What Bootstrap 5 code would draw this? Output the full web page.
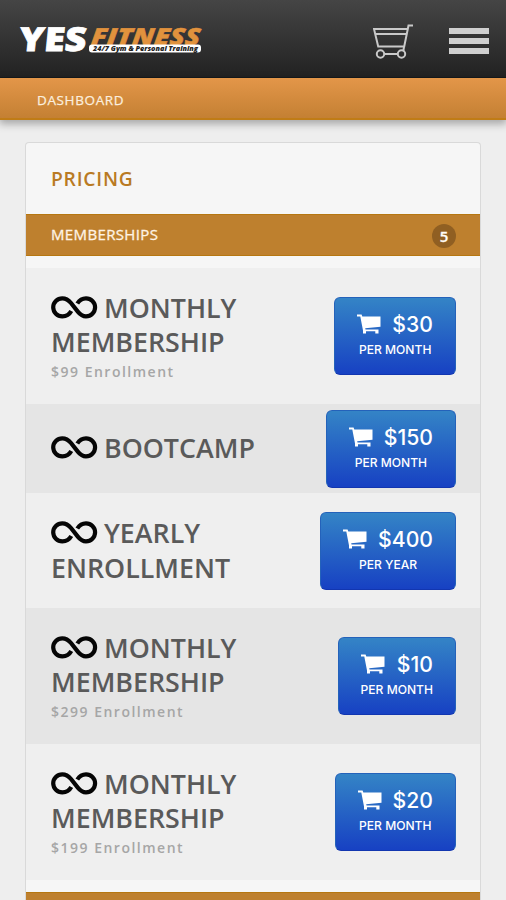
<!DOCTYPE html>
<html lang="en">
<head>
<meta charset="utf-8">
<meta name="viewport" content="width=device-width, initial-scale=1">
<title>Yes Fitness - Pricing</title>
<link href="https://cdn.jsdelivr.net/npm/bootstrap@5.3.0/dist/css/bootstrap.min.css" rel="stylesheet">
<style>
body{background:#eee;font-family:"Open Sans","Noto Sans",sans-serif;height:900px;overflow:hidden}
.topbar{height:78px;background:linear-gradient(#454545,#222);border-bottom:1px solid #161a1c;padding:0 17px 0 14px}
.brand-logo{width:196px;height:36px;overflow:visible}
.cart-link{margin:6px 36px 0 0}
.menu-btn{width:40px;height:26px;margin-top:4px}
.crumbs{height:42px;background:linear-gradient(#e39649,#c48033);border-bottom:2px solid #c07c16;color:#fbeede;font-size:13.5px;letter-spacing:.62px;-webkit-text-stroke:.25px #fbeede;padding:4px 37px 0;box-shadow:0 3px 8px 1px rgba(0,0,0,.3)}
.pricing{margin:22px 25px 0;background:#f6f6f6;border:1px solid #d9d9d9;border-radius:4px;overflow:hidden;height:758px;border-bottom:0;border-bottom-left-radius:0;border-bottom-right-radius:0}
.pricing-title{height:71px;font-size:19.3px;font-weight:600;letter-spacing:.75px;color:#b97a23;padding:1px 25px 0}
.group-bar{height:42px;background:#be802e;border:solid #b67710;border-width:1px 0;color:#fff3e4;font-size:15px;letter-spacing:.36px;-webkit-text-stroke:.3px #fff3e4;padding:0 24px 0 25px}
.group-bar>span:first-child{margin-top:-2px}
.count{width:24px;height:24px;background:#905f22;font-size:15px;letter-spacing:0;font-weight:600;color:#fff;margin-top:2px}
.plans{margin:12px 0}
.plan{padding:0 24px 0 25px;background:#efefef}
.plan:nth-child(even){background:#e5e5e5}
.plan-name{padding:23.1px 0;font-size:26.8px;line-height:34.4px;font-weight:600;color:#5a5a5a}
.plan-name.with-fee{padding:23px 0 22.2px}
.loop{width:47px;height:23px;margin-right:6px;vertical-align:-1px}
.fee{font-size:14px;line-height:20px;margin-top:2px;font-weight:600;letter-spacing:1.5px;color:#a6a6a6}
.buy{font-family:Inter,sans-serif;height:78px;margin:5.5px 0;padding:0 22px;border:1px solid #2462ba;border-bottom-color:#1236b0;border-radius:6px;background:linear-gradient(#3484c6,#1741c3);color:#fff;font-weight:500}
.buy:hover{color:#fff}
.price{font-size:21.2px;line-height:28px;gap:11px}
.price svg{width:24px;height:20px}
.term{font-size:12.1px;line-height:24px}
</style>
<script src="https://cdn.jsdelivr.net/npm/bootstrap@5.3.0/dist/js/bootstrap.bundle.min.js" defer></script>
</head>
<body>
<svg class="d-none" xmlns="http://www.w3.org/2000/svg">
  <symbol id="loop" viewBox="0 0 47 23"><path d="M20.300 15C18.500 18.300 15.500 20.300 11.300 20.300A9.100 9 0 0 1 11.300 2.300C15 2.300 17.500 4 20 7L26.800 15.600C29.300 18.700 31.500 20.300 35 20.300A9.100 9 0 0 0 35 2.300C31.300 2.300 28.300 4.300 26.300 7.500" fill="none" stroke="#050505" stroke-width="4.200"/></symbol>
  <symbol id="cart" viewBox="0 0 24 20"><path d="M0 .6h4.600l.7 2H23.500v10.200L8.200 14.300l.3 1.200H21.500v4h-3.200v-2.300H9v2.300H6V16.500L3.300 2.400H0z" fill="#fff"/></symbol>
</svg>

<header class="topbar d-flex align-items-center justify-content-between">
  <svg class="brand-logo" viewBox="0 0 196 36" font-family="Open Sans,sans-serif" font-weight="800">
    <g transform="skewX(-6)">
      <text x="7.500" y="30" font-size="33" textLength="67" lengthAdjust="spacingAndGlyphs" fill="#fff" stroke="#fff" stroke-width=".8">YES</text>
      <text x="79" y="23.500" font-size="23.500" font-style="italic" textLength="109" lengthAdjust="spacingAndGlyphs" fill="#e1923d" stroke="#e1923d" stroke-width=".5">FITNESS</text>
    </g>
    <rect x="75" y="23.500" width="112" height="8" rx="3" fill="#fff"/>
    <text x="79" y="30" font-size="7" font-style="italic" textLength="105" lengthAdjust="spacingAndGlyphs" fill="#222">24/7 Gym &amp; Personal Training</text>
  </svg>
  <div class="d-flex align-items-center">
    <svg class="cart-link" width="40" height="36" viewBox="12 5 40 36" fill="none" stroke="#c9c9c9" stroke-width="2">
      <path d="M52 6.500h-4.500L43 28.500M46.500 10H13l4.200 17.500H43M14 15H45"/>
      <circle cx="19.500" cy="35" r="3.700"/><circle cx="40.500" cy="35" r="3.700"/><path d="M23.500 35h13M43 28l-.7 4"/>
    </svg>
    <svg class="menu-btn" viewBox="0 0 40 26" fill="#cfcfcf"><path d="M0 0h40v6H0zM0 10h40v6H0zM0 20h40v6H0z"/></svg>
  </div>
</header>
<nav class="crumbs d-flex align-items-center position-relative">DASHBOARD</nav>

<main class="pricing">
  <h1 class="pricing-title d-flex align-items-center m-0">PRICING</h1>
  <div class="group-bar d-flex align-items-center justify-content-between"><span>MEMBERSHIPS</span><span class="count rounded-circle d-flex align-items-center justify-content-center">5</span></div>
  <div class="plans">
    <div class="plan d-flex align-items-center justify-content-between">
      <div class="plan-name with-fee"><svg class="loop"><use href="#loop"/></svg>MONTHLY<br>MEMBERSHIP<div class="fee">$99 Enrollment</div></div>
      <button class="btn buy"><span class="price d-flex align-items-center justify-content-between"><svg><use href="#cart"/></svg>$30</span><span class="term d-block">PER MONTH</span></button>
    </div>
    <div class="plan d-flex align-items-center justify-content-between">
      <div class="plan-name"><svg class="loop"><use href="#loop"/></svg>BOOTCAMP</div>
      <button class="btn buy"><span class="price d-flex align-items-center justify-content-between"><svg><use href="#cart"/></svg>$150</span><span class="term d-block">PER MONTH</span></button>
    </div>
    <div class="plan d-flex align-items-center justify-content-between">
      <div class="plan-name"><svg class="loop"><use href="#loop"/></svg>YEARLY<br>ENROLLMENT</div>
      <button class="btn buy"><span class="price d-flex align-items-center justify-content-between"><svg><use href="#cart"/></svg>$400</span><span class="term d-block">PER YEAR</span></button>
    </div>
    <div class="plan d-flex align-items-center justify-content-between">
      <div class="plan-name with-fee"><svg class="loop"><use href="#loop"/></svg>MONTHLY<br>MEMBERSHIP<div class="fee">$299 Enrollment</div></div>
      <button class="btn buy"><span class="price d-flex align-items-center justify-content-between"><svg><use href="#cart"/></svg>$10</span><span class="term d-block">PER MONTH</span></button>
    </div>
    <div class="plan d-flex align-items-center justify-content-between">
      <div class="plan-name with-fee"><svg class="loop"><use href="#loop"/></svg>MONTHLY<br>MEMBERSHIP<div class="fee">$199 Enrollment</div></div>
      <button class="btn buy"><span class="price d-flex align-items-center justify-content-between"><svg><use href="#cart"/></svg>$20</span><span class="term d-block">PER MONTH</span></button>
    </div>
  </div>
  <div class="group-bar"></div>
</main>
</body>
</html>
